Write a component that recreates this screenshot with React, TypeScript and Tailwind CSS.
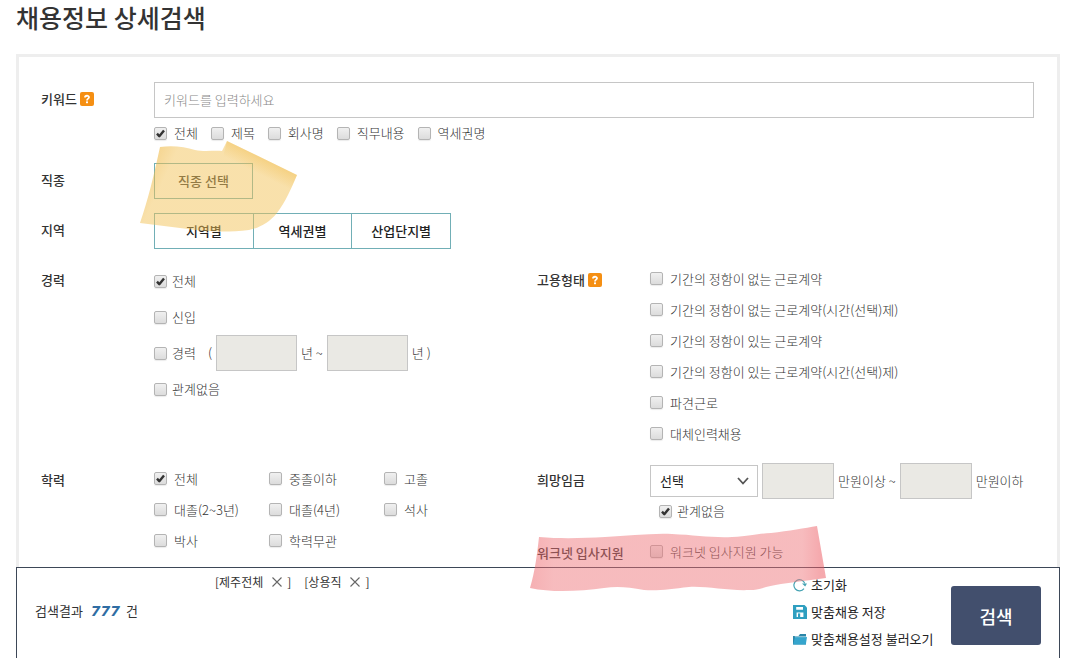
import React, { ReactNode } from "react";

type CheckProps = { label: string; checked?: boolean; tight?: boolean };

function Check({ label, checked, tight }: CheckProps) {
  return (
    <label className={tight ? "flex items-center gap-[5px] whitespace-nowrap" : "flex items-center gap-[7px] whitespace-nowrap"}>
      <span className="grid shrink-0">
        <input
          type="checkbox"
          defaultChecked={checked}
          className="peer col-start-1 row-start-1 size-[13px] appearance-none rounded-[2px] border border-[#b4b4b4] bg-linear-to-b from-[#f0f0f0] to-[#dcdcdc] shadow-[0_1px_1px_rgba(0,0,0,0.08)]"
        />
        <svg viewBox="0 0 13 13" className="pointer-events-none invisible z-10 col-start-1 row-start-1 size-[13px] peer-checked:visible" fill="none" aria-hidden="true">
          <path d="M3 6.6 L5.3 9.2 L10 3.4" stroke="#333" strokeWidth="2.4" strokeLinejoin="round" />
        </svg>
      </span>
      {label}
    </label>
  );
}

function Help() {
  return (
    <button type="button" aria-label="도움말" className="ml-[3px] grid size-[14px] place-items-center rounded-[2px] bg-[#f58f13]">
      <svg viewBox="0 0 14 14" className="size-[14px]" fill="none" aria-hidden="true">
        <path d="M5 5.4 C5 3.2 9 3.2 9 5.3 C9 6.7 7 6.6 7 8.4" stroke="#fff" strokeWidth="1.8" />
        <rect x="6" y="9.4" width="2" height="1.8" fill="#fff" />
      </svg>
    </button>
  );
}

function Field({ label, help, children }: { label: string; help?: boolean; children: ReactNode }) {
  return (
    <div className="flex" role="group" aria-label={label}>
      <div className="flex h-[34px] w-[113px] shrink-0 items-center font-medium whitespace-nowrap text-[#333]">
        {label}
        {help && <Help />}
      </div>
      <div className="min-w-0 flex-1">{children}</div>
    </div>
  );
}

function NumberBox({ label, wide }: { label: string; wide?: boolean }) {
  return (
    <input
      type="text"
      disabled
      aria-label={label}
      className={wide ? "h-9 w-[81px] border border-[#c6c6c6] bg-[#eae9e4]" : "h-9 w-[72px] border border-[#c6c6c6] bg-[#eae9e4]"}
    />
  );
}

function YellowMark() {
  return (
    <svg viewBox="0 0 160 94" className="pointer-events-none absolute -top-6 -left-[15px] z-20 h-[94px] w-[160px]" aria-hidden="true">
      <defs>
        <linearGradient id="yellow" x1="0" y1="0.35" x2="1" y2="0.62">
          <stop offset="0" stopColor="#eeb53c" stopOpacity="0.62" />
          <stop offset="0.16" stopColor="#f2c257" stopOpacity="0.5" />
          <stop offset="1" stopColor="#f2c257" stopOpacity="0.5" />
        </linearGradient>
        <linearGradient id="yellowEdge" gradientUnits="userSpaceOnUse" x1="123" y1="19" x2="116" y2="33">
          <stop offset="0" stopColor="#eeb02c" stopOpacity="0.3" />
          <stop offset="1" stopColor="#eeb02c" stopOpacity="0" />
        </linearGradient>
      </defs>
      <path d="M21 8 C34 6 46 8 56 11 C66 13 76 11 83 12 L88 2 L158 36 C152 50 147 62 138 74 C130 84 120 89 110 91 C84 94 60 92 41 89 L1 84 C9 61 15 36 21 8Z" fill="url(#yellow)" />
      <path d="M88 2 L158 36 L150 54 L84 18Z" fill="url(#yellowEdge)" />
    </svg>
  );
}

function PinkMark() {
  return (
    <svg viewBox="0 0 300 68" className="pointer-events-none absolute -top-[11px] -left-2 z-20 h-[68px] w-[300px]" aria-hidden="true">
      <defs>
        <linearGradient id="pink" x1="0" y1="0" x2="1" y2="0">
          <stop offset="0" stopColor="#ec6066" stopOpacity="0.5" />
          <stop offset="0.08" stopColor="#ee7277" stopOpacity="0.48" />
          <stop offset="0.92" stopColor="#ee7277" stopOpacity="0.48" />
          <stop offset="0.98" stopColor="#ec5a62" stopOpacity="0.52" />
        </linearGradient>
      </defs>
      <path d="M10 12 C34 14 55 13 76 12 C100 11 122 8 143 9 C166 10 184 13 203 12 C222 11 232 8 242 8 C260 6 276 3 288 1 L297 53 L252 59 C238 61 230 65 221 65 C199 66 178 61 160 62 C142 64 130 66 115 65 C99 62 88 61 75 63 C52 66 24 68 1 63 C6 46 8 30 10 12Z" fill="url(#pink)" />
    </svg>
  );
}

function Tag({ name }: { name: string }) {
  return (
    <span className="flex items-center whitespace-nowrap">
      [{name}
      <button type="button" aria-label={`${name} 삭제`} className="mx-[9px] mr-[5px]">
        <svg viewBox="0 0 10 10" className="size-[10px]" stroke="#666" strokeWidth="1.1" aria-hidden="true">
          <path d="M0.5 0.5 L9.5 9.5 M9.5 0.5 L0.5 9.5" />
        </svg>
      </button>
      ]
    </span>
  );
}

const contracts = [
  "기간의 정함이 없는 근로계약",
  "기간의 정함이 없는 근로계약(시간(선택)제)",
  "기간의 정함이 있는 근로계약",
  "기간의 정함이 있는 근로계약(시간(선택)제)",
  "파견근로",
  "대체인력채용",
];

const degrees = ["전체", "중졸이하", "고졸", "대졸(2~3년)", "대졸(4년)", "석사", "박사", "학력무관"];

export default function App() {
  return (
    <main className="bg-white pr-[14px] pl-4 font-['Noto_Sans_CJK_KR',sans-serif] text-[13px] leading-5 font-light text-[#333]">
      <h1 className="h-[54px] text-[25px] leading-[34px] font-medium text-[#333]">채용정보 상세검색</h1>

      <form className="flex flex-col gap-[14px] border-3 border-b-0 border-[#eee] pt-[25px] pr-[23px] pl-[22px]">
        <Field label="키워드" help>
          <input
            type="text"
            aria-label="키워드"
            placeholder="키워드를 입력하세요"
            className="h-9 w-full border border-[#c6c6c6] px-[9px] pb-0.5 placeholder:text-[#888]"
          />
          <div className="flex gap-[13px] pt-[5px] pb-1.5">
            <Check label="전체" checked />
            <Check label="제목" />
            <Check label="회사명" />
            <Check label="직무내용" />
            <Check label="역세권명" />
          </div>
        </Field>

        <Field label="직종">
          <div className="relative">
            <button type="button" className="h-9 w-[99px] border border-[#71afb6] font-medium text-[#333]">직종 선택</button>
            <YellowMark />
          </div>
        </Field>

        <Field label="지역">
          <div className="flex w-[297px] divide-x divide-[#71afb6] border border-[#71afb6] font-medium text-[#222]">
            <button type="button" className="h-[34px] flex-1">지역별</button>
            <button type="button" className="h-[34px] flex-1">역세권별</button>
            <button type="button" className="h-[34px] flex-1">산업단지별</button>
          </div>
        </Field>

        <div className="grid grid-cols-[minmax(0,1fr)_497px]">
          <Field label="경력">
            <div className="flex h-9 items-center"><Check label="전체" checked tight /></div>
            <div className="flex h-9 items-center"><Check label="신입" tight /></div>
            <div className="flex h-9 items-center gap-1 whitespace-nowrap">
              <Check label="경력" tight />
              <span className="pl-2">(</span>
              <NumberBox label="최소 경력" wide />
              <span>년 ~</span>
              <NumberBox label="최대 경력" wide />
              <span>년 )</span>
            </div>
            <div className="flex h-9 items-center"><Check label="관계없음" tight /></div>
          </Field>
          <Field label="고용형태" help>
            {contracts.map((name) => (
              <div key={name} className="flex h-[31px] items-center"><Check label={name} /></div>
            ))}
          </Field>
        </div>

        <div className="grid grid-cols-[minmax(0,1fr)_497px]">
          <Field label="학력">
            <div className="grid w-[345px] grid-cols-3">
              {degrees.map((name, i) => (
                <div key={name} className="flex h-[31px] items-center"><Check label={name} checked={i === 0} /></div>
              ))}
            </div>
          </Field>
          <div className="flex flex-col gap-[13px]">
            <Field label="희망임금">
              <div className="flex items-center gap-1 whitespace-nowrap">
                <div className="grid items-center">
                  <select aria-label="임금 유형" className="col-start-1 row-start-1 h-8 w-[108px] appearance-none border border-[#c6c6c6] bg-white px-[9px] font-normal text-[#222]">
                    <option>선택</option>
                  </select>
                  <svg viewBox="0 0 12 8" className="pointer-events-none col-start-1 row-start-1 mr-[9px] h-2 w-3 justify-self-end" fill="none" stroke="#555" strokeWidth="1.8" aria-hidden="true">
                    <path d="M1 1 L6 6.5 L11 1" />
                  </svg>
                </div>
                <NumberBox label="최소 임금" />
                <span>만원이상 ~</span>
                <NumberBox label="최대 임금" />
                <span>만원이하</span>
              </div>
              <div className="flex h-6 items-center pl-[9px]"><Check label="관계없음" checked tight /></div>
            </Field>
            <div className="relative">
              <Field label="워크넷 입사지원">
                <div className="flex h-[31px] items-center"><Check label="워크넷 입사지원 가능" /></div>
              </Field>
              <PinkMark />
            </div>
          </div>
        </div>
      </form>

      <section className="relative z-10 -mt-[3px] flex h-[91px] border border-b-0 border-[#3d4757] bg-white px-[18px]">
        <p className="flex w-[180px] items-center self-start pt-[33px] font-normal text-[#333]">
          검색결과
          <strong className="mr-1.5 ml-2 font-['DejaVu_Sans',sans-serif] text-[14px] font-bold text-[#2f6da3] italic">777</strong>
          건
        </p>
        <div className="flex gap-[13px] self-start pt-1 text-[12px] font-normal">
          <Tag name="제주전체" />
          <Tag name="상용직" />
        </div>
        <div className="ml-auto flex w-[158px] flex-col items-start gap-[7px] pt-[7px] font-normal whitespace-nowrap text-[#222]">
          <button type="button" className="flex items-center gap-1">
            <svg viewBox="0 0 14 14" className="size-[14px]" fill="none" stroke="#45a3b3" strokeWidth="1.2" aria-hidden="true">
              <path d="M11 10.6 A5.6 5.6 0 1 1 11.8 5.4" />
              <path d="M9 5.6 H14 L12.2 8.6Z" fill="#45a3b3" stroke="none" />
            </svg>
            초기화
          </button>
          <button type="button" className="flex items-center gap-1">
            <svg viewBox="0 0 14 14" className="size-[14px]" aria-hidden="true">
              <path d="M0 0 H11.5 L14 2.5 V14 H0Z" fill="#2f9fc0" />
              <path d="M3.2 2 H10 V4.8 H3.2Z M3.6 7.4 H10.4 V12 H3.6Z" fill="#fff" />
              <rect x="5" y="8.4" width="2.2" height="3.6" fill="#2f9fc0" />
            </svg>
            맞춤채용 저장
          </button>
          <button type="button" className="flex items-center gap-1">
            <svg viewBox="0 0 14 14" className="size-[14px]" aria-hidden="true">
              <path d="M0 4 H5.5 L7 2 H13 V12.6 H0Z" fill="#2b86a8" />
              <path d="M2 5 H14 L12.8 12.6 H0.2Z" fill="#35a5cd" />
              <path d="M1.8 4.7 H13.6" stroke="#d5edf5" strokeWidth="0.7" />
            </svg>
            맞춤채용설정 불러오기
          </button>
        </div>
        <button type="button" className="mt-[18px] h-[59px] w-[90px] rounded-[3px] bg-[#424f6d] text-[18px] font-medium text-white">
          검색
        </button>
      </section>
    </main>
  );
}
